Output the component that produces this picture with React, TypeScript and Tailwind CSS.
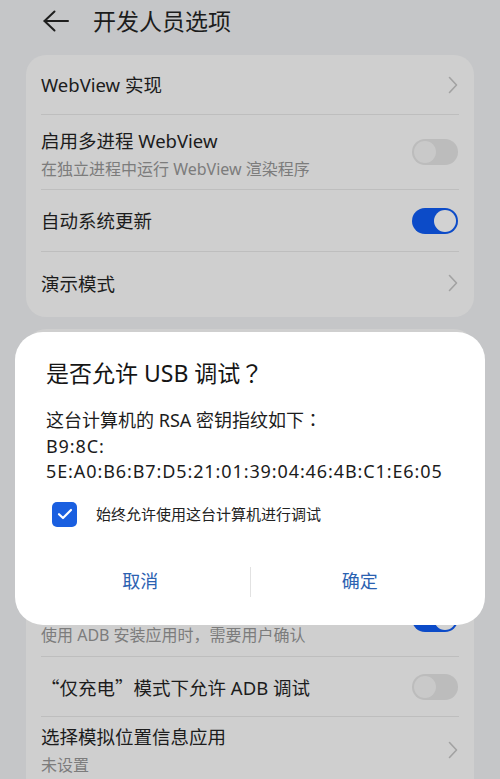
import React from "react";

const font = { fontFamily: '"Noto Sans", "Noto Sans CJK SC", sans-serif' };
const cjk = { fontFamily: '"Noto Sans CJK SC", sans-serif' };
const cjkTc = { fontFamily: '"Noto Sans CJK TC", "Noto Sans CJK SC", sans-serif' };

function Chevron() {
  return (
    <svg width="10" height="18" viewBox="0 0 10 18" fill="none" className="shrink-0">
      <path d="M1.5 1.5 L8.5 9 L1.5 16.5" stroke="#a2a2a2" strokeWidth="1.6" strokeLinecap="round" strokeLinejoin="round" />
    </svg>
  );
}

function Toggle({ on }: { on: boolean }) {
  if (on) {
    return (
      <div className="w-[46px] h-[26px] rounded-full bg-[#0c4bc8] flex items-center justify-end px-[2px] shrink-0">
        <div className="w-[22px] h-[22px] rounded-full bg-[#d2d2d2]" />
      </div>
    );
  }
  return (
    <div className="w-[46px] h-[26px] rounded-full bg-[#bcbcbc] flex items-center justify-start px-[2px] shrink-0">
      <div className="w-[22px] h-[22px] rounded-full bg-[#c9c9c9]" />
    </div>
  );
}

function Row({
  title,
  sub,
  right,
  h,
  pt,
  border = true,
}: {
  title?: React.ReactNode;
  sub?: string;
  right?: React.ReactNode;
  h: string;
  pt?: string;
  border?: boolean;
}) {
  return (
    <div className={`${h} flex justify-between ${sub ? "items-stretch" : "items-center"} ${border ? "border-b border-[#bebebe]" : ""}`}>
      {sub ? (
        <div className={`flex flex-col ${pt ?? "pt-[13px]"}`}>
          <div className="text-[18.5px] leading-[26px] h-[26px] text-[#1c1c1c]">{title}</div>
          <div className="text-[16px] leading-[22px] mt-[4px] text-[#7c7c7c]">{sub}</div>
        </div>
      ) : (
        <div className="text-[18.5px] leading-[26px] text-[#1c1c1c] pt-[1px]">{title}</div>
      )}
      {right && <div className="flex items-center pr-[1px]">{right}</div>}
    </div>
  );
}

export default function App() {
  return (
    <div className="w-[500px] h-[779px] relative overflow-hidden bg-[#c5c6c8]" style={font}>
      {/* Header */}
      <div className="h-[42px] flex items-center pl-[43px] gap-[24px]">
        <svg width="26" height="22" viewBox="0 0 26 22" fill="none">
          <path d="M1.5 11 H25" stroke="#1e1e1e" strokeWidth="2" strokeLinecap="round" />
          <path d="M11.5 1.5 L1.5 11 L11.5 20.5" stroke="#1e1e1e" strokeWidth="2" strokeLinecap="round" strokeLinejoin="round" />
        </svg>
        <div className="text-[23px] leading-[30px] text-[#1c1c1c]">开发人员选项</div>
      </div>

      {/* Card 1 */}
      <div className="mx-[26px] mt-[13px] rounded-[20px] bg-[#cfcfcf] px-[15px] pb-[3px]">
        <Row h="h-[60px]" title="WebView 实现" right={<Chevron />} />
        <Row h="h-[75px]" title="启用多进程 WebView" sub="在独立进程中运行 WebView 渲染程序" right={<Toggle on={false} />} />
        <Row h="h-[62px]" title="自动系统更新" right={<Toggle on={true} />} />
        <Row h="h-[62px]" title="演示模式" right={<Chevron />} border={false} />
      </div>

      {/* Card 2 (upper rows lie under the dialog) */}
      <div className="mx-[26px] mt-[12px] rounded-t-[20px] bg-[#cfcfcf] px-[15px]">
        <Row h="h-[63px]" right={<Toggle on={true} />} />
        <Row h="h-[63px]" />
        <Row h="h-[63px]" right={<Toggle on={false} />} />
        <Row h="h-[63px]" right={<Toggle on={false} />} />
        <Row h="h-[76px]" title="" sub="使用 ADB 安装应用时，需要用户确认" right={<Toggle on={true} />} />
        <Row
          h="h-[60px]"
          title={
            <>
              <span style={cjk}>“</span>仅充电<span style={cjk}>”</span>模式下允许 ADB 调试
            </>
          }
          right={<Toggle on={false} />}
        />
        <Row h="h-[80px]" title="选择模拟位置信息应用" sub="未设置" pt="pt-[7px]" right={<div className="pb-[14px]"><Chevron /></div>} border={false} />
      </div>

      {/* Dialog */}
      <div className="absolute left-[15px] top-[332px] w-[470px] h-[293px] rounded-[28px] bg-white flex flex-col">
        <div className="pl-[31px] pt-[25px] text-[23px] leading-[30px] text-[#151515]">
          是否允许 USB 调试<span style={cjkTc}>？</span>
        </div>
        <div className="pl-[31px] mt-[19px] text-[18px] leading-[25.5px] text-[#1c1c1c]">
          <div>
            这台计算机的 RSA 密钥指纹如下<span style={cjkTc}>：</span>
          </div>
          <div className="tracking-[0.9px]">B9:8C:</div>
          <div className="tracking-[0.9px]">5E:A0:B6:B7:D5:21:01:39:04:46:4B:C1:E6:05</div>
        </div>
        <div className="pl-[37px] mt-[17px] flex items-center gap-[19px]">
          <div className="w-[25px] h-[25px] rounded-[5px] bg-[#1a5fe0] flex items-center justify-center">
            <svg width="16" height="12" viewBox="0 0 16 12" fill="none">
              <path d="M2 6.2 L6 10 L14 2" stroke="white" strokeWidth="2.2" strokeLinecap="round" strokeLinejoin="round" />
            </svg>
          </div>
          <div className="text-[15px] leading-[22px] text-[#222]">始终允许使用这台计算机进行调试</div>
        </div>
        <div className="mt-[31px] px-[16px] h-[48px] flex items-center">
          <div className="flex-1 text-center text-[18px] text-[#2b61b1]">取消</div>
          <div className="w-px h-[30px] bg-[#e2e2e2]" />
          <div className="flex-1 text-center text-[18px] text-[#2b61b1]">确定</div>
        </div>
      </div>
    </div>
  );
}
